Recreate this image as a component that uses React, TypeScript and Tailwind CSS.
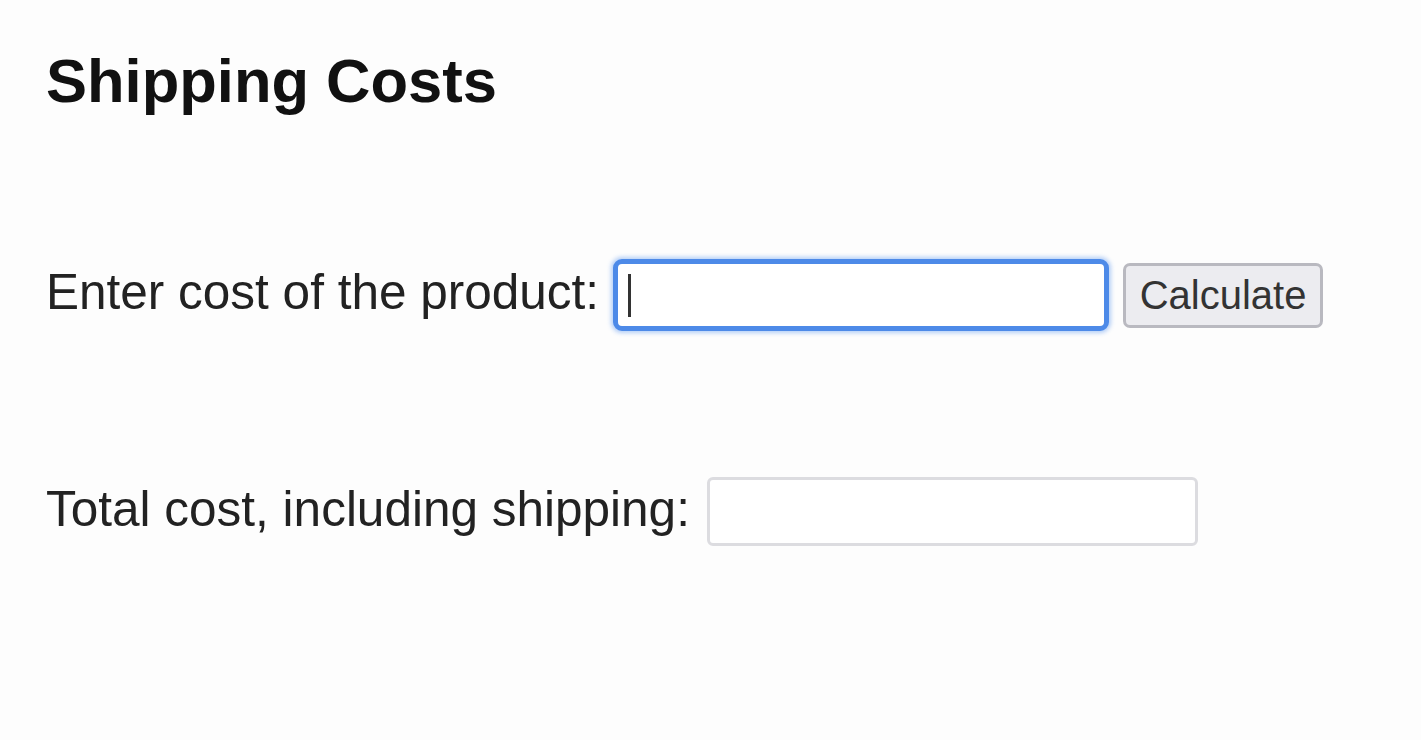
import React from "react";

export default function App() {
  return (
    <div
      className="min-h-[740px] w-full bg-[#fdfdfd] pl-[46px] pt-[46px] text-[#222]"
      style={{ fontFamily: '"Liberation Sans", Arial, sans-serif' }}
    >
      <h1 className="m-0 text-[61.5px] font-bold leading-[70px] text-[#111]">Shipping Costs</h1>

      <div className="mt-[142px] flex h-[74px] items-center">
        <span className="pb-[6px] text-[49.5px] leading-[1.15] whitespace-nowrap">Enter cost of the product:</span>
        <div className="ml-[14px] flex h-[72px] w-[496px] items-center rounded-[9px] border-[5px] border-[#4d8ae8] bg-white pl-[10px] shadow-[0_0_4px_2px_rgba(90,150,240,0.45)]">
          <div className="h-[43px] w-[3px] bg-[#333]" />
        </div>
        <button className="ml-[14px] flex h-[65px] w-[200px] items-center justify-center rounded-[7px] border-[3px] border-[#b9b9c0] bg-[#ececf0] text-[40px] leading-none text-[#333]">
          Calculate
        </button>
      </div>

      <div className="mt-[144px] flex h-[70px] items-center">
        <span className="pb-[4px] text-[49.5px] leading-[1.15] whitespace-nowrap">Total cost, including shipping:</span>
        <div className="ml-[17px] h-[69px] w-[491px] rounded-[6px] border-[3px] border-[#dcdce0] bg-white" />
      </div>
    </div>
  );
}
